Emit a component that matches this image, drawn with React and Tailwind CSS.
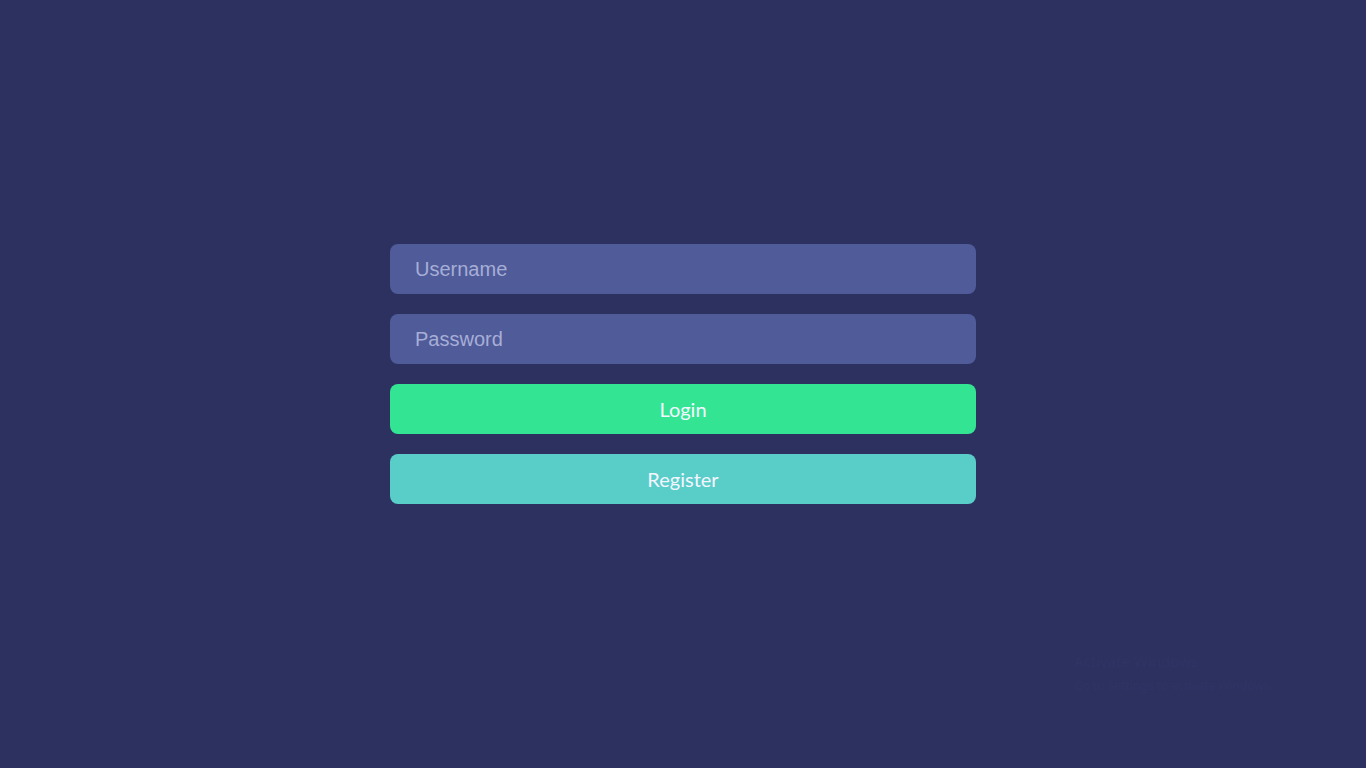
export default function App() {
  return (
    <div className="relative min-h-screen w-full bg-[#2c3160] font-['Liberation_Sans',Arial,sans-serif]">
      <form
        className="mx-auto flex w-[586px] flex-col gap-5 pt-[244px]"
        onSubmit={(e) => e.preventDefault()}
      >
        <input
          type="text"
          placeholder="Username"
          className="h-[50px] w-full rounded-lg bg-[#505b9a] px-[25px] text-[20px] text-white outline-none placeholder:text-[#a7aed6]"
        />
        <input
          type="password"
          placeholder="Password"
          className="h-[50px] w-full rounded-lg bg-[#505b9a] px-[25px] text-[20px] text-white outline-none placeholder:text-[#a7aed6]"
        />
        <button
          type="submit"
          className="h-[50px] w-full rounded-lg bg-[#33e593] font-['Lato',sans-serif] text-[20px] text-[#f4f6ff]"
        >
          Login
        </button>
        <button
          type="button"
          className="h-[50px] w-full rounded-lg bg-[#59cdc8] font-['Lato',sans-serif] text-[20px] text-[#f4f6ff]"
        >
          Register
        </button>
      </form>
      <div className="pointer-events-none absolute left-[1074px] top-[651px] font-['Noto_Sans',sans-serif] text-[#2f3465]">
        <div className="text-[15px] leading-5">Activate Windows</div>
        <div className="mt-[6px] text-[12px]">Go to Settings to activate Windows.</div>
      </div>
    </div>
  );
}
